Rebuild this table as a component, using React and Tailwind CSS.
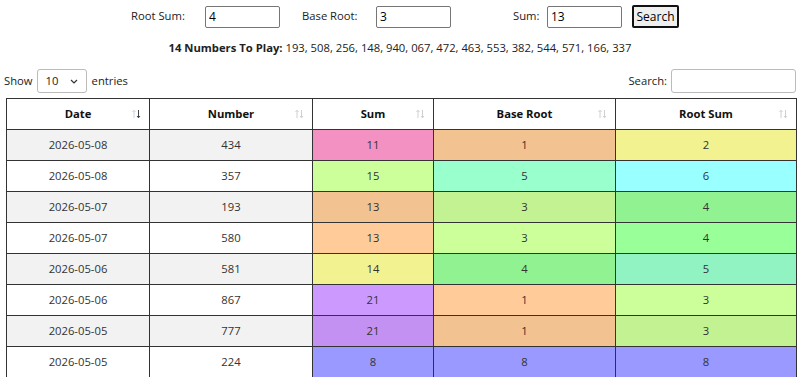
import React from 'react';

const rows = [
  { date: '2026-05-08', num: '434', sum: ['11', 'bg-[#f291c2]'], base: ['1', 'bg-[#f2c291]'], root: ['2', 'bg-[#f2f291]'], odd: true },
  { date: '2026-05-08', num: '357', sum: ['15', 'bg-[#ccff99]'], base: ['5', 'bg-[#99ffcc]'], root: ['6', 'bg-[#99ffff]'] },
  { date: '2026-05-07', num: '193', sum: ['13', 'bg-[#f2c291]'], base: ['3', 'bg-[#c2f291]'], root: ['4', 'bg-[#91f291]'], odd: true },
  { date: '2026-05-07', num: '580', sum: ['13', 'bg-[#ffcc99]'], base: ['3', 'bg-[#ccff99]'], root: ['4', 'bg-[#99ff99]'] },
  { date: '2026-05-06', num: '581', sum: ['14', 'bg-[#f2f291]'], base: ['4', 'bg-[#91f291]'], root: ['5', 'bg-[#91f2c2]'], odd: true },
  { date: '2026-05-06', num: '867', sum: ['21', 'bg-[#cc99ff]'], base: ['1', 'bg-[#ffcc99]'], root: ['3', 'bg-[#ccff99]'] },
  { date: '2026-05-05', num: '777', sum: ['21', 'bg-[#c291f2]'], base: ['1', 'bg-[#f2c291]'], root: ['3', 'bg-[#c2f291]'], odd: true },
  { date: '2026-05-05', num: '224', sum: ['8', 'bg-[#9999ff]'], base: ['8', 'bg-[#9999ff]'], root: ['8', 'bg-[#9999ff]'] },
  // only the top edge of this row shows in the window
  { date: '', num: '', sum: ['', 'bg-[#f291c2]'], base: ['', 'bg-[#c2f291]'], root: ['', 'bg-[#91f2c2]'], odd: true },
];

// little up/down arrows next to each header label
const SortIcon = ({ active }) => (
  <svg width="9" height="10" viewBox="0 0 9 10" className="absolute right-[8px] top-1/2 -translate-y-1/2">
    <path d="M2 9V1.5M0.5 3L2 1.2L3.5 3" stroke={active ? '#c7d6e6' : '#d0d0d0'} strokeWidth="1" fill="none" />
    <path d="M6.5 1V8.5M5 7L6.5 8.8L8 7" stroke={active ? '#444' : '#d0d0d0'} strokeWidth="1" fill="none" />
  </svg>
);

const Th = ({ children, w, active }) => (
  <th className={`relative h-[31px] ${w} border border-[#333] bg-white text-center font-bold text-[#111]`}>
    {children}
    <SortIcon active={active} />
  </th>
);

export default function App() {
  return (
    <div className="w-[800px] h-[377px] overflow-hidden bg-white text-[11.25px] text-[#222]" style={{ fontFamily: '"Open Sans", "Noto Sans", sans-serif' }}>
      {/* search form */}
      <div className="flex items-center pt-[5px] pl-[131px] h-[28px]">
        <span className="w-[74px]">Root Sum:</span>
        <input readOnly value="4" className="w-[75px] h-[22px] border border-[#767676] rounded-[2px] px-[3px] text-[12px] text-black" />
        <span className="w-[74px] ml-[22px]">Base Root:</span>
        <input readOnly value="3" className="w-[75px] h-[22px] border border-[#767676] rounded-[2px] px-[3px] text-[12px] text-black" />
        <span className="w-[34px] ml-[62px]">Sum:</span>
        <input readOnly value="13" className="w-[75px] h-[22px] border border-[#767676] rounded-[2px] px-[3px] text-[12px] text-black" />
        <button className="ml-[10px] w-[47px] h-[23px] border-2 border-[#111] rounded-[2px] bg-[#efefef] text-[12px] text-black">Search</button>
      </div>

      <div className="mt-[12px] text-center leading-[16px]">
        <b>14 Numbers To Play:</b> 193, 508, 256, 148, 940, 067, 472, 463, 553, 382, 544, 571, 166, 337
      </div>

      {/* table controls */}
      <div className="flex items-center justify-between px-[4px] mt-[13px] h-[24px]">
        <div className="flex items-center">
          <span>Show</span>
          <div className="ml-[4px] mr-[5px] w-[50px] h-[24px] border border-[#bbb] rounded-[3px] flex items-center justify-between px-[8px]">
            <span>10</span>
            <svg width="8" height="5" viewBox="0 0 8 5"><path d="M1 1l3 3 3-3" stroke="#333" strokeWidth="1.2" fill="none" /></svg>
          </div>
          <span>entries</span>
        </div>
        <div className="flex items-center">
          <span>Search:</span>
          <div className="ml-[4px] w-[125px] h-[24px] border border-[#bbb] rounded-[3px]" />
        </div>
      </div>

      <table className="ml-[6px] mt-[5px] w-[790px] border-collapse table-fixed">
        <thead>
          <tr>
            <Th w="w-[143px]" active>Date</Th>
            <Th w="w-[163px]">Number</Th>
            <Th w="w-[121px]">Sum</Th>
            <Th w="w-[182px]">Base Root</Th>
            <Th w="w-[181px]">Root Sum</Th>
          </tr>
        </thead>
        <tbody className="text-[#333]">
          {rows.map((r, i) => {
            const plain = r.odd ? 'bg-[#f2f2f2]' : 'bg-white';
            return (
              <tr key={i} className="h-[31px]">
                <td className={`border border-[#333] text-center ${plain}`}>{r.date}</td>
                <td className={`border border-[#333] text-center ${plain}`}>{r.num}</td>
                <td className={`border border-[#333] text-center ${r.sum[1]}`}>{r.sum[0]}</td>
                <td className={`border border-[#333] text-center ${r.base[1]}`}>{r.base[0]}</td>
                <td className={`border border-[#333] text-center ${r.root[1]}`}>{r.root[0]}</td>
              </tr>
            );
          })}
        </tbody>
      </table>
    </div>
  );
}
